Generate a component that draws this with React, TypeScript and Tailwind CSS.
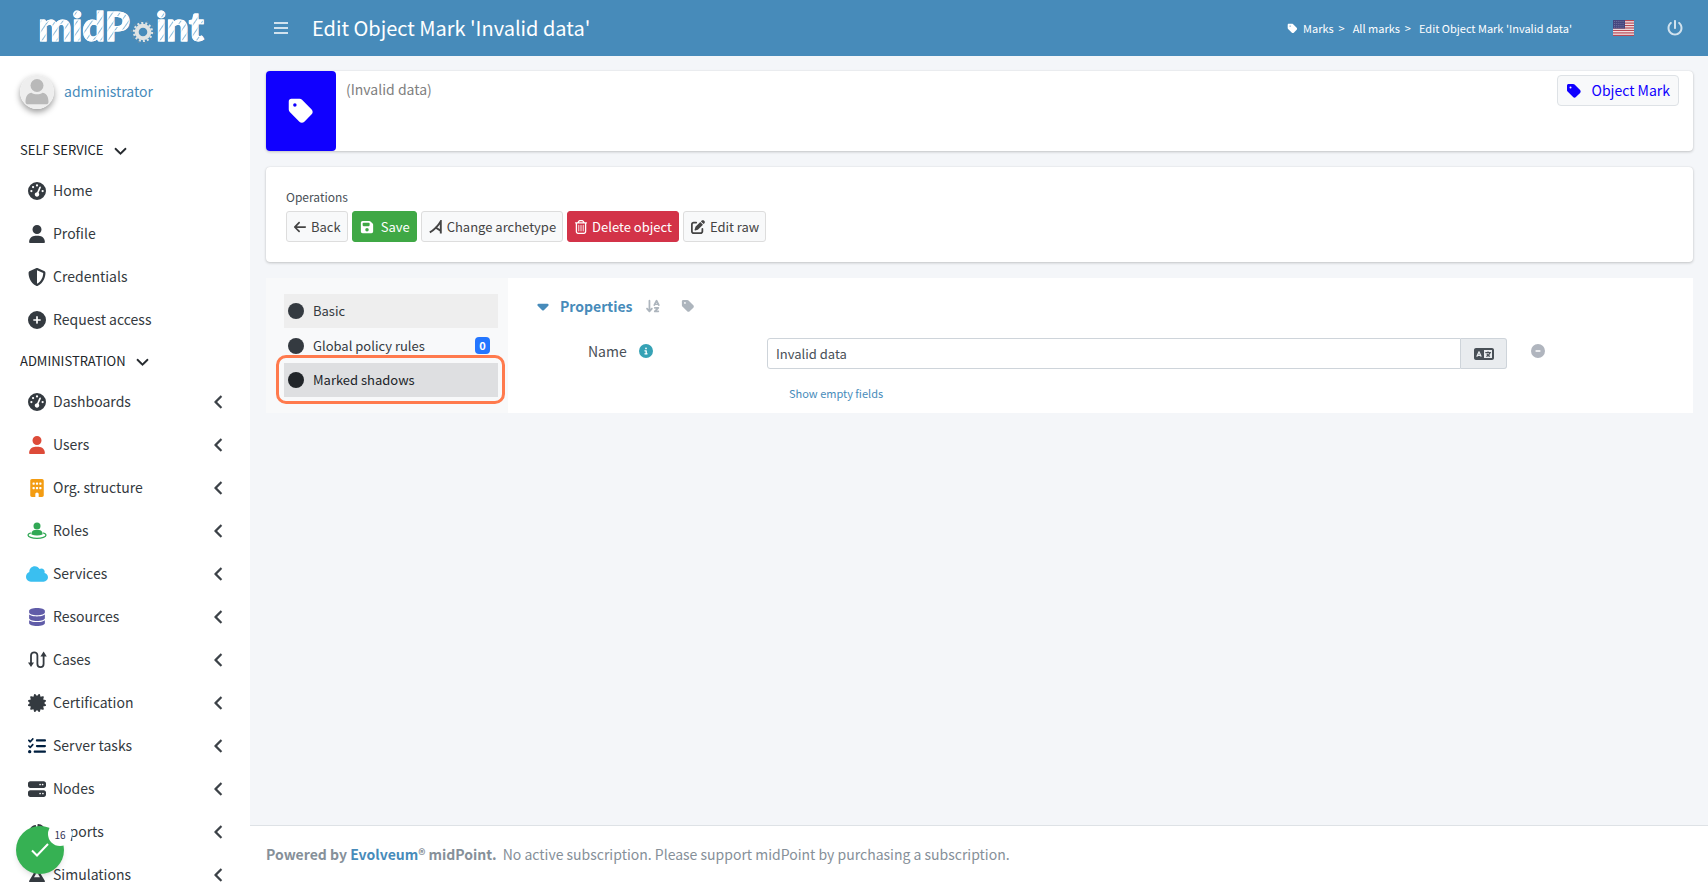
import React from "react";
import {
  FaArrowDownAZ,
  FaArrowLeft,
  FaBuilding,
  FaCaretDown,
  FaCertificate,
  FaChartPie,
  FaChevronDown,
  FaChevronLeft,
  FaCircle,
  FaCircleInfo,
  FaCircleMinus,
  FaCirclePlus,
  FaCloud,
  FaDatabase,
  FaFlask,
  FaFloppyDisk,
  FaGaugeHigh,
  FaLanguage,
  FaListCheck,
  FaPenToSquare,
  FaPowerOff,
  FaRegTrashCan,
  FaServer,
  FaShieldHalved,
  FaTag,
  FaUser,
} from "react-icons/fa6";

type Item = { label: string; icon: React.ReactNode };

function RoleIcon() {
  return (
    <svg viewBox="0 0 20 18" className="h-[18px] w-5" fill="#31a855">
      <circle cx="10" cy="4" r="3.5" />
      <path d="M4.5 12.5v-1.2c0-2 1.6-3.3 3.5-3.3h4c1.9 0 3.5 1.3 3.5 3.3v1.2c-1.6.7-3.4 1-5.5 1s-3.9-.3-5.5-1z" />
      <path d="M3.8 10.8C2 11.4 1 12.2 1 13c0 1.9 4 3.4 9 3.4s9-1.5 9-3.4c0-.8-1-1.6-2.8-2.2" fill="none" stroke="#31a855" strokeWidth="1.3" />
    </svg>
  );
}

function CaseIcon() {
  return (
    <svg viewBox="0 0 20 20" className="h-5 w-5" fill="none" stroke="#343a40" strokeWidth="1.8">
      <path d="M4 13.5V5.5a3.2 3.2 0 0 1 6.4 0v8.5a3.1 3.1 0 0 0 6.2 0V5.5" />
      <path d="M1 12.5h6L4 17z" fill="#343a40" stroke="none" />
      <path d="M13.4 6.5h6.4l-3.2-5z" fill="#343a40" stroke="none" />
    </svg>
  );
}

function ArchetypeIcon() {
  return (
    <svg viewBox="0 0 14 14" className="h-3.5 w-3.5" fill="none" stroke="#444" strokeWidth="1.9">
      <path d="M.8 12.3C5 10 9 6 11.8 1.2V13.4" />
      <path d="M6.2 7.2l5.3 3.4" />
    </svg>
  );
}

function Gear() {
  return (
    <svg viewBox="-12 -12 24 24" className="h-6 w-6" fill="none">
      <circle r="11.2" stroke="#7b8f9c" strokeWidth="1" strokeDasharray="2 5" />
      <circle r="9" stroke="#dfe3e3" strokeWidth="2.2" strokeDasharray="2 2.04" />
      <circle r="6.3" stroke="#dfe3e3" strokeWidth="4" />
    </svg>
  );
}

function Flag() {
  return (
    <svg viewBox="0 0 21 16" className="h-4 w-[21px]">
      <rect width="21" height="16" fill="#f3eef0" />
      {[0, 2.46, 4.92, 7.38, 9.85, 12.3, 14.77].map((y) => (
        <rect key={y} y={y} width="21" height="1.23" fill="#b94753" />
      ))}
      <rect width="12" height="8.6" fill="#46467f" />
      {[1.5, 3.5, 5.5, 7.2].map((y) => (
        <path key={y} d={`M1 ${y}h10`} stroke="#8f91b5" strokeWidth=".7" strokeDasharray=".8 1.1" />
      ))}
    </svg>
  );
}

const dark = "text-[#343a40]";

const selfService: Item[] = [
  { label: "Home", icon: <FaGaugeHigh className={`size-[18px] ${dark}`} /> },
  { label: "Profile", icon: <FaUser className={`size-[18px] ${dark}`} /> },
  { label: "Credentials", icon: <FaShieldHalved className={`size-[18px] ${dark}`} /> },
  { label: "Request access", icon: <FaCirclePlus className={`size-[18px] ${dark}`} /> },
];

const administration: Item[] = [
  { label: "Dashboards", icon: <FaGaugeHigh className={`size-[18px] ${dark}`} /> },
  { label: "Users", icon: <FaUser className="size-[18px] text-[#dd4b39]" /> },
  { label: "Org. structure", icon: <FaBuilding className="size-[18px] text-[#f39c12]" /> },
  { label: "Roles", icon: <RoleIcon /> },
  { label: "Services", icon: <FaCloud className="size-[22px] text-[#3abff0]" /> },
  { label: "Resources", icon: <FaDatabase className="size-[18px] text-[#605ca8]" /> },
  { label: "Cases", icon: <CaseIcon /> },
  { label: "Certification", icon: <FaCertificate className={`size-[18px] ${dark}`} /> },
  { label: "Server tasks", icon: <FaListCheck className="size-[18px] text-[#001f3f]" /> },
  { label: "Nodes", icon: <FaServer className={`size-[18px] ${dark}`} /> },
  { label: "Reports", icon: <FaChartPie className={`size-[18px] ${dark}`} /> },
  { label: "Simulations", icon: <FaFlask className={`size-[18px] ${dark}`} /> },
];

function NavSection({ title, items, expandable }: { title: string; items: Item[]; expandable?: boolean }) {
  return (
    <section>
      <button type="button" className="flex h-[38px] items-center gap-[10px] pl-5 text-[13px] text-[#212529]">
        {title}
        <FaChevronDown className="size-[13px] stroke-current stroke-[16px]" />
      </button>
      <ul>
        {items.map((item) => (
          <li key={item.label}>
            <a href="#" className="flex h-[43px] items-center pr-6 pl-[26px] text-[14px] text-[#343a40]">
              <span className="mr-1 flex w-[22px] justify-center">{item.icon}</span>
              <span className="flex-1 pl-px">{item.label}</span>
              {expandable && <FaChevronLeft className="size-[14px] stroke-current stroke-[24px]" />}
            </a>
          </li>
        ))}
      </ul>
    </section>
  );
}

const logoText =
  "bg-[repeating-linear-gradient(125deg,#fff_0px,#fff_4px,#8dbbd9_5px,#fff_6px)] bg-clip-text text-transparent [-webkit-text-stroke:1px_#fff]";

function Sidebar() {
  return (
    <aside className="flex h-screen w-[250px] shrink-0 flex-col overflow-hidden bg-white">
      <a
        href="#"
        aria-label="midPoint"
        className="flex h-14 shrink-0 items-center justify-center bg-[#478bba] pr-2 pb-1 font-['Lato'] text-[40px] leading-none font-black text-white"
      >
        <span className={logoText}>midP</span>
        <span className="mx-px mt-3"><Gear /></span>
        <span className={logoText}>int</span>
      </a>
      <div className="flex h-[75px] shrink-0 items-center gap-[10px] pb-1 pl-5">
        <svg viewBox="0 0 34 34" className="size-[34px] rounded-full shadow-[0_3px_6px_rgba(0,0,0,0.4)]">
          <rect width="34" height="34" fill="#eeeeee" />
          <circle cx="17" cy="10.5" r="6.5" fill="#b9b9b9" />
          <path d="M5.5 27c0-6 2.5-9 6-9.3 3 2.2 8 2.2 11 0 3.5.3 6 3.3 6 9.3 0 1.5-1 2.3-2.5 2.3H8c-1.5 0-2.5-.8-2.5-2.3z" fill="#b9b9b9" />
        </svg>
        <a href="#" className="text-[14px] text-[#478bba]">administrator</a>
      </div>
      <nav aria-label="Main menu" className="flex flex-col gap-px">
        <NavSection title="SELF SERVICE" items={selfService} />
        <NavSection title="ADMINISTRATION" items={administration} expandable />
      </nav>
    </aside>
  );
}

function TopBar() {
  return (
    <header className="flex h-14 shrink-0 items-center bg-[#478bba] pr-[25px] pl-6 text-white">
      <button type="button" aria-label="Toggle menu" className="text-white/75">
        <svg viewBox="0 0 14 12" className="h-3 w-3.5" fill="currentColor">
          <path d="M0 0h14v2H0zM0 5h14v2H0zM0 10h14v2H0z" />
        </svg>
      </button>
      <h1 className="ml-6 text-[20px]">Edit Object Mark 'Invalid data'</h1>
      <nav aria-label="Breadcrumb" className="ml-auto flex items-center gap-2 text-[11px]">
        <a href="#" className="flex items-center">
          <FaTag className="mr-[5px] size-[11px]" />
          Marks&nbsp; &gt;
        </a>
        <a href="#">All marks&nbsp; &gt;</a>
        <a href="#">Edit Object Mark 'Invalid data'</a>
      </nav>
      <button type="button" aria-label="Language" className="ml-[41px]"><Flag /></button>
      <button type="button" aria-label="Log out" className="ml-[33px] text-white/75"><FaPowerOff className="size-4" /></button>
    </header>
  );
}

const btn = "flex h-[31px] items-center rounded-[3px] border px-[6px] text-[13px]";
const plain = "border-[#ddd] bg-[#f8f9fa] text-[#444]";

function Operations() {
  return (
    <section className="rounded bg-white px-5 pt-5 pb-5 shadow-[0_0_1px_rgba(0,0,0,0.13),0_1px_3px_rgba(0,0,0,0.2)]">
      <h2 className="text-[12px] leading-5 text-[#495057]">Operations</h2>
      <div className="mt-1 flex flex-wrap gap-1">
        <button type="button" className={`${btn} ${plain}`}><FaArrowLeft className="mr-1 size-[14px]" />Back</button>
        <button type="button" className={`${btn} border-[#3fa845] bg-[#3fa845] text-white`}><FaFloppyDisk className="mr-[7px] ml-px size-[14px]" />Save</button>
        <button type="button" className={`${btn} ${plain}`}><span className="mr-1 ml-px"><ArchetypeIcon /></span>Change archetype</button>
        <button type="button" className={`${btn} border-[#d33348] bg-[#d33348] text-white`}><FaRegTrashCan className="mr-1 size-[14px]" />Delete object</button>
        <button type="button" className={`${btn} ${plain}`}><FaPenToSquare className="mr-[5px] ml-px size-[14px]" />Edit raw</button>
      </div>
    </section>
  );
}

function Details() {
  return (
    <section className="flex bg-white">
      <nav aria-label="Details" className="w-[242px] shrink-0 bg-[#f8f9fa] py-4 pr-[10px] pl-[18px] text-[13px] text-[#343a40]">
        <a href="#" className="flex h-[34px] items-center gap-[9px] bg-[#eeeeee] px-1"><FaCircle className="size-4" />Basic</a>
        <a href="#" className="flex h-[35px] items-center gap-[9px] pr-2 pl-1">
          <FaCircle className="size-4" />
          <span className="flex-1">Global policy rules</span>
          <span className="flex h-[17px] w-[15px] items-center justify-center rounded bg-[#2476ff] text-[11px] font-bold text-white">0</span>
        </a>
        <a href="#" className="relative flex h-[34px] items-center gap-[9px] bg-[#dedfe1] px-1 text-[#212529]">
          <span className="absolute -top-2 -right-[7px] -bottom-[7px] -left-2 rounded-[10px] border-[3px] border-[#ff7a4d]" />
          <FaCircle className="size-4" />Marked shadows
        </a>
      </nav>
      <div className="min-w-0 flex-1 pt-4 pb-2">
        <div className="flex h-6 items-center pl-[26px]">
          <FaCaretDown className="size-[18px] text-[#478bba]" />
          <h2 className="ml-2 text-[14px] font-bold text-[#478bba]">Properties</h2>
          <button type="button" aria-label="Sort" className="ml-3 text-[#adb5bd]"><FaArrowDownAZ className="size-4" /></button>
          <button type="button" aria-label="Metadata" className="ml-5 text-[#adb5bd]"><FaTag className="size-[14px]" /></button>
        </div>
        <div className="mt-5 flex items-start">
          <div className="flex h-[26px] w-[259px] items-center pl-20 text-[14px] text-[#495057]">
            <label htmlFor="name">Name</label>
            <FaCircleInfo className="ml-3 size-[14px] text-[#36a2b5]" />
          </div>
          <div className="flex h-[31px] flex-1">
            <input id="name" defaultValue="Invalid data" className="min-w-0 flex-1 rounded-l-[3px] border border-[#ced4da] px-2 text-[13px] text-[#495057]" />
            <button type="button" aria-label="Translate" className="flex w-[46px] items-center justify-center rounded-r-[3px] border border-l-0 border-[#ced4da] bg-[#e9ecef] text-[#495057]"><FaLanguage className="size-5" /></button>
          </div>
          <div className="flex h-[26px] w-[186px] items-center pl-6">
            <button type="button" aria-label="Remove value" className="block text-[#b0b5be]"><FaCircleMinus className="size-[14px]" /></button>
          </div>
        </div>
        <a href="#" className="mt-[14px] mb-[2px] ml-[281px] inline-block text-[11px] leading-5 text-[#478bba]">Show empty fields</a>
      </div>
    </section>
  );
}

export default function App() {
  return (
    <div className="flex h-screen overflow-hidden bg-[#f4f6f9] font-['Noto_Sans_CJK_SC','Noto_Sans',sans-serif]">
      <Sidebar />
      <div className="flex min-w-0 flex-1 flex-col">
        <TopBar />
        <main className="flex flex-1 flex-col gap-4 px-4 pt-[15px] pr-[15px]">
          <section className="flex h-20 rounded bg-white shadow-[0_0_1px_rgba(0,0,0,0.13),0_1px_3px_rgba(0,0,0,0.2)]">
            <div className="flex w-[70px] items-center justify-center rounded bg-[#1000ff]"><FaTag className="size-7 text-white" /></div>
            <div className="flex flex-1 items-start justify-between pr-[14px] pl-[10px]">
              <p className="pt-[7px] text-[14px] leading-[22px] text-[#808080]">(Invalid data)</p>
              <a href="#" className="mt-1 flex h-[31px] items-center gap-[10px] rounded border border-[#dee2e6] bg-[#f8f9fa] px-2 text-[14px] text-[#1000ff]"><FaTag className="size-4" />Object Mark</a>
            </div>
          </section>
          <Operations />
          <Details />
        </main>
        <footer className="flex h-[57px] shrink-0 items-center border-t border-[#dee2e6] bg-white px-4 text-[14px] text-[#869099]">
          <strong>Powered by <a href="#" className="text-[#478bba]">Evolveum</a>® midPoint.</strong>
          <span className="ml-[6px]">No active subscription. Please support midPoint by purchasing a subscription.</span>
        </footer>
      </div>
      <button type="button" aria-label="16 notifications" className="fixed bottom-[8px] left-4 flex size-12 items-center justify-center rounded-full bg-[#36b153] text-white shadow-md">
        <svg viewBox="0 0 18 14" className="h-3.5 w-[18px]" fill="none" stroke="currentColor" strokeWidth="2"><path d="M1 7.5l5 5L17 1" /></svg>
        <span className="absolute -top-1 -right-2 flex size-6 items-center justify-center rounded-full bg-white text-[10px] text-[#333355]">16</span>
      </button>
    </div>
  );
}
